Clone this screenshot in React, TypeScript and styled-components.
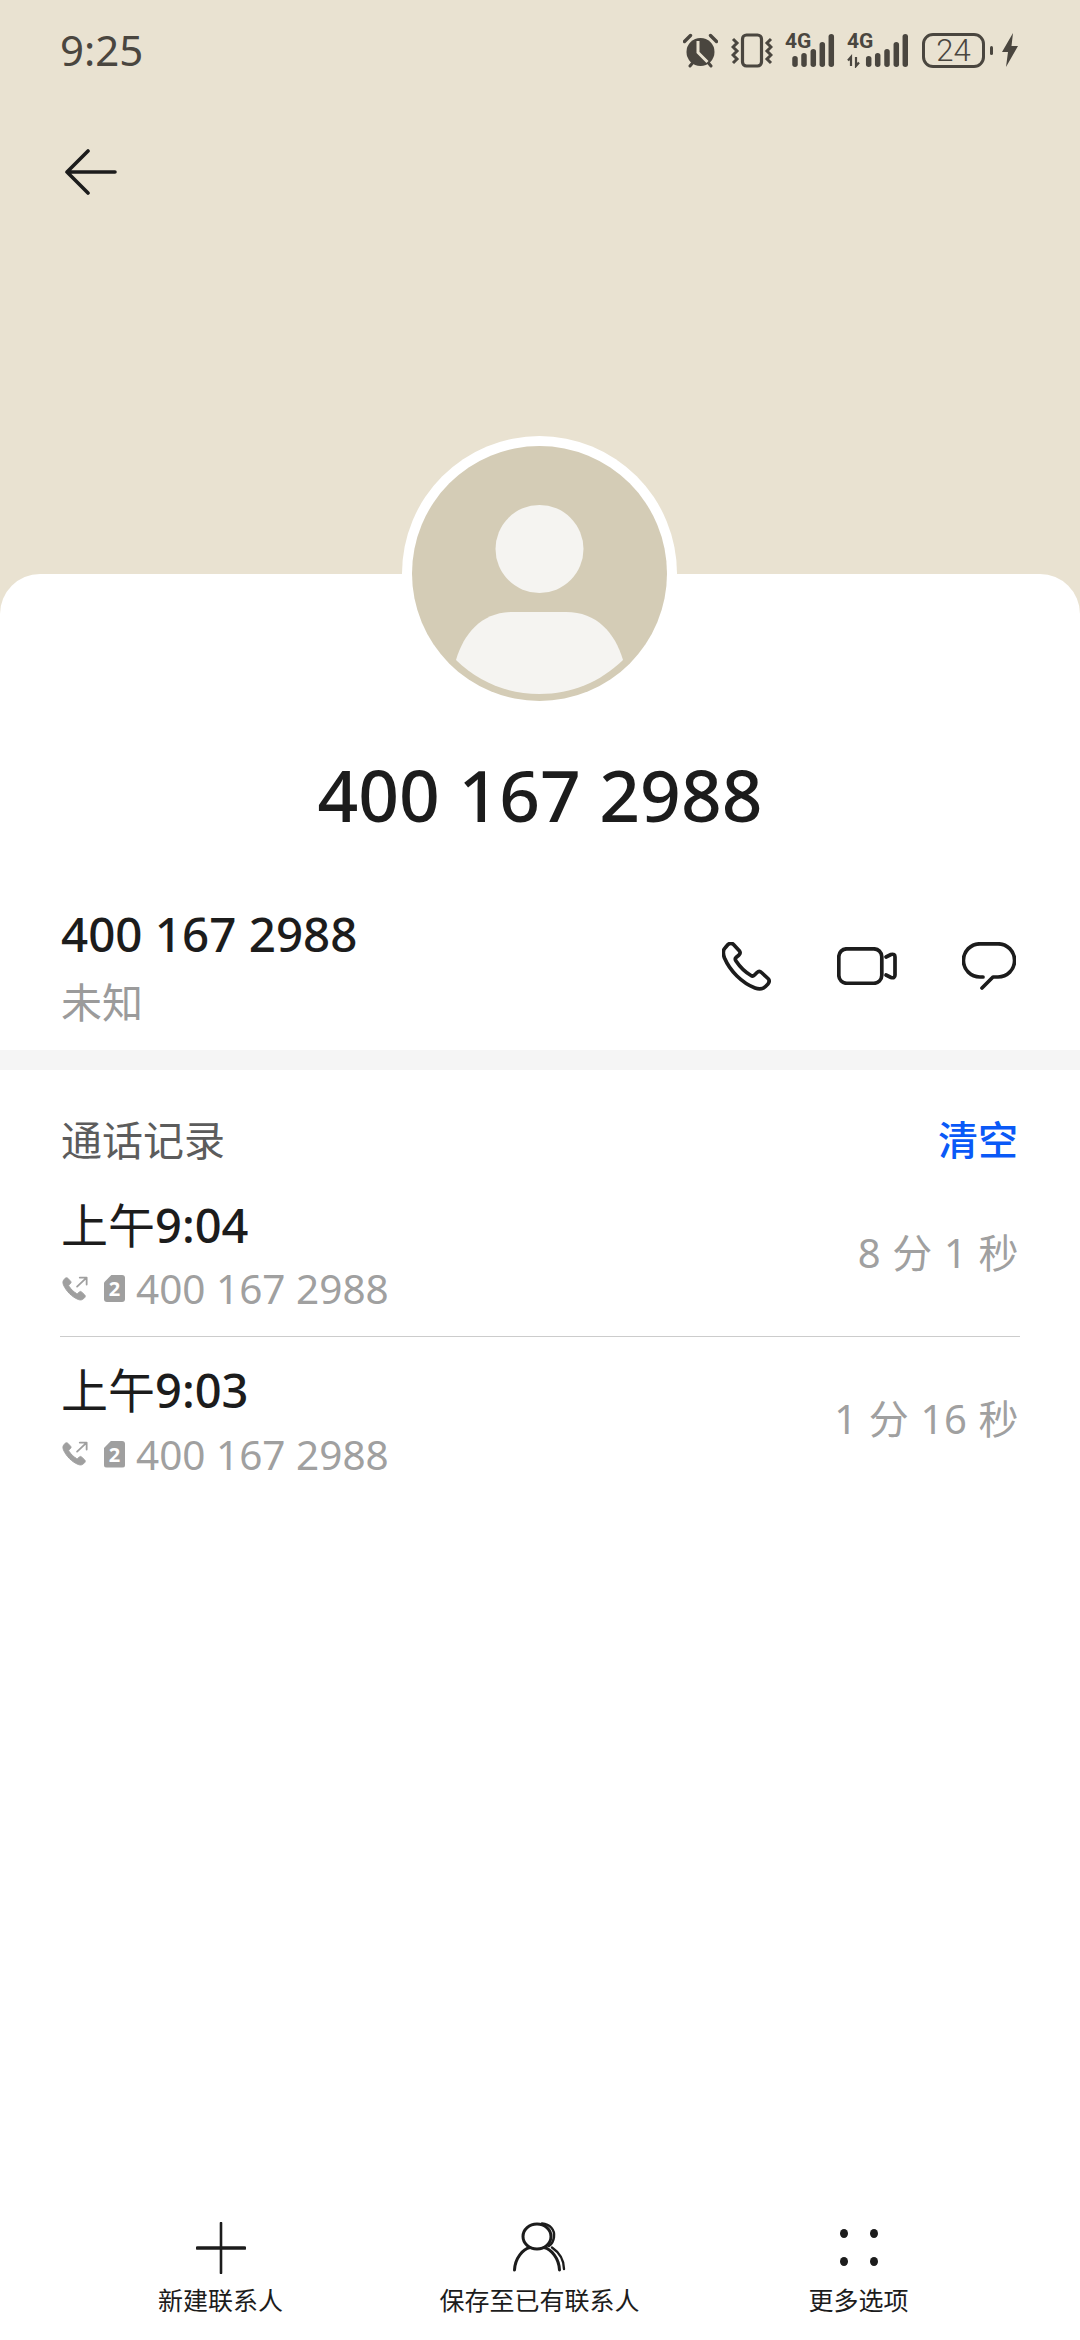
import React from 'react'
import styled, { createGlobalStyle } from 'styled-components'

const GlobalStyle = createGlobalStyle`
  html, body {
    margin: 0;
    padding: 0;
    background: #ffffff;
    font-family: 'Noto Sans', 'Noto Sans CJK SC', sans-serif;
  }
`

const Page = styled.div`
  width: 1080px;
  height: 2340px;
  display: flex;
  flex-direction: column;
  overflow: hidden;
`

const Header = styled.header`
  height: 614px;
  margin-bottom: -40px;
  background: #e9e2d1;
  flex-shrink: 0;
`

const StatusBar = styled.div`
  height: 100px;
  padding: 0 62px 0 60px;
  display: flex;
  align-items: center;
  justify-content: space-between;
`

const Clock = styled.span`
  font-size: 42px;
  line-height: 1;
  color: #4a463f;
`

const StatusIcons = styled.div`
  display: flex;
  align-items: center;
`

const StatusIcon = styled.svg<{ $gap?: number }>`
  display: block;
  margin-left: ${({ $gap }) => $gap ?? 0}px;
  fill: #4a463f;
`

const Signal = styled.div<{ $width: number }>`
  position: relative;
  width: ${({ $width }) => $width}px;
  height: 35px;
  margin-left: 12px;
`

const NetLabel = styled.span`
  position: absolute;
  top: -3px;
  left: 0;
  font-family: Roboto, sans-serif;
  font-size: 21px;
  line-height: 22px;
  font-weight: 700;
  color: #4a463f;
`

const Battery = styled.div`
  box-sizing: border-box;
  width: 63px;
  height: 35px;
  margin-left: 14px;
  border: 3px solid #4a463f;
  border-radius: 11px;
  display: flex;
  align-items: center;
  justify-content: center;
  font-family: Roboto, sans-serif;
  font-size: 31px;
  font-weight: 300;
  color: #4a463f;
`

const BatteryNub = styled.div`
  width: 3px;
  height: 9px;
  margin-left: 5px;
  border-radius: 2px;
  background: #4a463f;
`

const BackButton = styled.button`
  display: block;
  margin: 49px 0 0 64px;
  padding: 0;
  border: 0;
  background: none;
`

const Sheet = styled.main`
  position: relative;
  flex: 1;
  display: flex;
  flex-direction: column;
  background: #ffffff;
  border-radius: 40px 40px 0 0;
`

const AvatarRing = styled.div`
  position: absolute;
  top: -138px;
  left: 402px;
  width: 275px;
  height: 275px;
  border-radius: 50%;
  background: #ffffff;
  display: flex;
  align-items: center;
  justify-content: center;
`

const Title = styled.h1`
  margin: 171px 0 0;
  font-size: 71.3px;
  line-height: 100px;
  font-weight: 500;
  text-align: center;
  color: #1c1c1c;
`

const ContactRow = styled.section`
  margin-top: 55px;
  padding: 0 64px 14px 61px;
  display: flex;
  align-items: center;
  justify-content: space-between;
`

const ContactText = styled.div`
  display: flex;
  flex-direction: column;
`

const ContactNumber = styled.div`
  font-size: 47.5px;
  line-height: 68px;
  font-weight: 500;
  color: #1c1c1c;
`

const ContactLabel = styled.div`
  font-size: 41px;
  line-height: 68px;
  color: #9b9b9b;
`

const ContactActions = styled.div`
  display: flex;
  align-items: center;
  gap: 65px;
  margin-top: -4px;
`

const Band = styled.div`
  height: 20px;
  background: #f5f5f5;
`

const SectionHead = styled.div`
  box-sizing: border-box;
  margin-top: 40px;
  padding: 0 62px 7px 61px;
  height: 62px;
  display: flex;
  align-items: center;
  justify-content: space-between;
`

const SectionTitle = styled.span`
  font-size: 41px;
  font-weight: 400;
  color: #5c5c5c;
`

const ClearButton = styled.span`
  font-size: 40px;
  font-weight: 500;
  color: #0a59f7;
`

const CallList = styled.div`
  margin: 0 60px;
`

const CallRow = styled.div`
  box-sizing: border-box;
  height: 165px;
  padding: 5px 1px 0 1px;
  display: flex;
  align-items: center;
  justify-content: space-between;
  border-bottom: 1.5px solid #cccccc;

  &:last-child {
    border-bottom: 0;
  }
`

const CallInfo = styled.div`
  display: flex;
  flex-direction: column;
`

const CallTime = styled.div`
  font-size: 47px;
  line-height: 64px;
  font-weight: 500;
  color: #1c1c1c;
`

const CallPeriod = styled.span`
  font-weight: 400;
`

const CallMeta = styled.div`
  display: flex;
  align-items: center;
  height: 64px;
  font-size: 40.5px;
  color: #a0a0a0;
`

const SimBadge = styled.span`
  width: 21px;
  height: 27px;
  margin: 0 11px 0 15px;
  display: flex;
  align-items: center;
  justify-content: center;
  font-size: 20px;
  font-weight: 700;
  color: #ffffff;
  background: #9f9f9f;
  border-radius: 3px;
  clip-path: polygon(35% 0, 100% 0, 100% 100%, 0 100%, 0 28%);
`

const Duration = styled.span`
  margin-top: -11px;
  font-size: 40px;
  letter-spacing: 0.6px;
  color: #a0a0a0;
`

const Toolbar = styled.nav`
  margin-top: auto;
  box-sizing: border-box;
  height: 120px;
  display: grid;
  grid-template-columns: repeat(3, 319px);
  padding: 0 61px;
`

const ToolButton = styled.div`
  display: flex;
  flex-direction: column;
  align-items: center;
  font-size: 25px;
  line-height: 36px;
  color: #1c1c1c;
  white-space: nowrap;
`

const ToolIcon = styled.div`
  height: 62px;
  padding-top: 2px;
  box-sizing: border-box;
  display: flex;
  align-items: flex-start;
  justify-content: center;
`

const LineIcon = styled.svg`
  display: block;
  fill: none;
  stroke: #1c1c1c;
  stroke-linecap: round;
  stroke-linejoin: round;
`

const SmallCallIcon = styled.svg`
  display: block;
  margin-left: 1px;
  fill: none;
  stroke: #9f9f9f;
  stroke-linecap: round;
  stroke-linejoin: round;
`

const DotsIcon = styled.svg`
  display: block;
  margin-top: 7px;
  fill: #1c1c1c;
`

const PHONE =
  'M6 2.5C8 1 10 1 11.5 2.5L17.5 9C18.5 10.5 18 12 17 13L14 15.5C13 16.5 13 17.5 14 19C18 25 23 30 29 33.5C30.5 34.5 31.5 34 32.5 33L35 30.5C36.5 29 38 29 39.5 30.5L46 36.5C47.5 38 47.5 40 46 42L43.5 44.5C41 47 37 47.5 33 46C20 41 8 29 2.5 16C1 12 1 8 3 6Z'

const AlarmIcon = () => (
  <StatusIcon width="35" height="35" viewBox="0 0 35 35">
    <circle cx="17.5" cy="19" r="14" />
    <path d="M1.5 8.5 7.5 2.5M33.5 8.5 27.5 2.5" stroke="#4a463f" strokeWidth="3.4" strokeLinecap="round" />
    <path d="M7 33 9.5 30M28 33 25.5 30" stroke="#4a463f" strokeWidth="3" strokeLinecap="round" />
    <path d="M15 8V19.5L24.5 29" fill="none" stroke="#e9e2d1" strokeWidth="3" />
  </StatusIcon>
)

const VibrateIcon = () => (
  <StatusIcon width="42" height="35" viewBox="0 0 42 35" $gap={13}>
    <rect x="11.5" y="2" width="19" height="31" rx="4" fill="none" stroke="#4a463f" strokeWidth="3.2" />
    <path d="M2 6 6 10 2 14 6 18 2 22 6 26 2 30" fill="none" stroke="#4a463f" strokeWidth="3" />
    <path d="M40 6 36 10 40 14 36 18 40 22 36 26 40 30" fill="none" stroke="#4a463f" strokeWidth="3" />
  </StatusIcon>
)

const SignalIcon = ({ bars, width, arrows }: { bars: number[]; width: number; arrows?: boolean }) => {
  const tops = [23, 20, 16, 9, 1]
  return (
    <Signal $width={width}>
      <NetLabel>4G</NetLabel>
      <StatusIcon width={width} height="35" viewBox={`0 0 ${width} 35`}>
        {arrows && <path d="M4 33V24L1 27.5M9 24V33L12 29.5" fill="none" stroke="#4a463f" strokeWidth="2.2" />}
        {bars.map((x, i) => (
          <rect key={x} x={x - 2.75} y={tops[i]} width="5.5" height={34 - tops[i]} rx="2.75" />
        ))}
      </StatusIcon>
    </Signal>
  )
}

const BoltIcon = () => (
  <StatusIcon width="16" height="34" viewBox="0 0 16 34" $gap={9}>
    <path d="M11 0 0 19H6L4 34 16 13H9.5Z" />
  </StatusIcon>
)

const BackIcon = () => (
  <LineIcon width="54" height="46" viewBox="0 0 54 46">
    <path d="M24 2 3 23 24 44M3 23H51" strokeWidth="3.6" />
  </LineIcon>
)

const Avatar = () => (
  <svg width="255" height="255" viewBox="0 0 255 255">
    <circle cx="127.5" cy="127.5" r="127.5" fill="#d4ccb6" />
    <circle cx="127.5" cy="103" r="44" fill="#f5f4f1" />
    <path
      d="M44 214C52 187 70 166 101 166H154C185 166 203 187 211 214C188 236 160 248 127.5 248C95 248 67 236 44 214Z"
      fill="#f5f4f1"
    />
  </svg>
)

const PhoneIcon = () => (
  <LineIcon width="50" height="49" viewBox="0 0 50 49">
    <path d={PHONE} strokeWidth="3.7" />
  </LineIcon>
)

const VideoIcon = () => (
  <LineIcon width="60" height="38" viewBox="0 0 60 38">
    <rect x="1.8" y="1.8" width="43" height="34.5" rx="8" strokeWidth="3.7" />
    <path d="M49 10 54 7.5Q58 6.5 58 10V28Q58 31.5 54 30.5L49 28" strokeWidth="3.7" />
  </LineIcon>
)

const MessageIcon = () => (
  <LineIcon width="54" height="48" viewBox="0 0 54 48">
    <path d="M21 35H18A16.5 16.5 0 0 1 18 1.8H36A16.5 16.5 0 0 1 36 35H31L20 46" strokeWidth="3.7" />
  </LineIcon>
)

const OutgoingCallIcon = () => (
  <SmallCallIcon width="27" height="26" viewBox="0 0 50 49">
    <path d={PHONE} fill="#9f9f9f" strokeWidth="2" transform="translate(0 2) scale(.92)" />
    <path d="M28 20 45 4M33 3H46V16" strokeWidth="3.4" />
  </SmallCallIcon>
)

const PlusIcon = () => (
  <LineIcon width="50" height="52" viewBox="0 0 50 52">
    <path d="M25 1V51" strokeWidth="2.6" />
    <path d="M1.5 26H48.5" strokeWidth="3.6" />
  </LineIcon>
)

const PersonIcon = () => (
  <LineIcon width="53" height="50" viewBox="0 0 53 50">
    <ellipse cx="24" cy="14.5" rx="14" ry="12.5" strokeWidth="3" />
    <path d="M1.5 48C2 36 10 27 17 25.5M46.5 48C46 36 38 27 31 25.5" strokeWidth="3" />
    <path d="M29 1.5C37 2 42 8 41 15C40.5 19 39 22 36 24M39 25.5C47 31 51 38 51 47" strokeWidth="2.4" />
  </LineIcon>
)

const MoreIcon = () => (
  <DotsIcon width="38" height="38" viewBox="0 0 38 38">
    <ellipse cx="4" cy="4.5" rx="4" ry="4.5" />
    <ellipse cx="34" cy="4.5" rx="4" ry="4.5" />
    <ellipse cx="4" cy="32.5" rx="4" ry="4.5" />
    <ellipse cx="34" cy="32.5" rx="4" ry="4.5" />
  </DotsIcon>
)

const calls = [
  { clock: '9:04', duration: '8 分 1 秒' },
  { clock: '9:03', duration: '1 分 16 秒' },
]

const App = () => {
  return (
    <Page>
      <GlobalStyle />
      <Header>
        <StatusBar>
          <Clock>9:25</Clock>
          <StatusIcons>
            <AlarmIcon />
            <VibrateIcon />
            <SignalIcon width={50} bars={[10, 19, 28.3, 37.3, 46.3]} />
            <SignalIcon width={61} bars={[21.7, 30.7, 40, 49.3, 58.3]} arrows />
            <Battery>24</Battery>
            <BatteryNub />
            <BoltIcon />
          </StatusIcons>
        </StatusBar>
        <BackButton>
          <BackIcon />
        </BackButton>
      </Header>
      <Sheet>
        <AvatarRing>
          <Avatar />
        </AvatarRing>
        <Title>400 167 2988</Title>
        <ContactRow>
          <ContactText>
            <ContactNumber>400 167 2988</ContactNumber>
            <ContactLabel>未知</ContactLabel>
          </ContactText>
          <ContactActions>
            <PhoneIcon />
            <VideoIcon />
            <MessageIcon />
          </ContactActions>
        </ContactRow>
        <Band />
        <SectionHead>
          <SectionTitle>通话记录</SectionTitle>
          <ClearButton>清空</ClearButton>
        </SectionHead>
        <CallList>
          {calls.map((call) => (
            <CallRow key={call.clock}>
              <CallInfo>
                <CallTime>
                  <CallPeriod>上午</CallPeriod>
                  {call.clock}
                </CallTime>
                <CallMeta>
                  <OutgoingCallIcon />
                  <SimBadge>2</SimBadge>
                  400 167 2988
                </CallMeta>
              </CallInfo>
              <Duration>{call.duration}</Duration>
            </CallRow>
          ))}
        </CallList>
        <Toolbar>
          <ToolButton>
            <ToolIcon>
              <PlusIcon />
            </ToolIcon>
            新建联系人
          </ToolButton>
          <ToolButton>
            <ToolIcon>
              <PersonIcon />
            </ToolIcon>
            保存至已有联系人
          </ToolButton>
          <ToolButton>
            <ToolIcon>
              <MoreIcon />
            </ToolIcon>
            更多选项
          </ToolButton>
        </Toolbar>
      </Sheet>
    </Page>
  )
}

export default App
